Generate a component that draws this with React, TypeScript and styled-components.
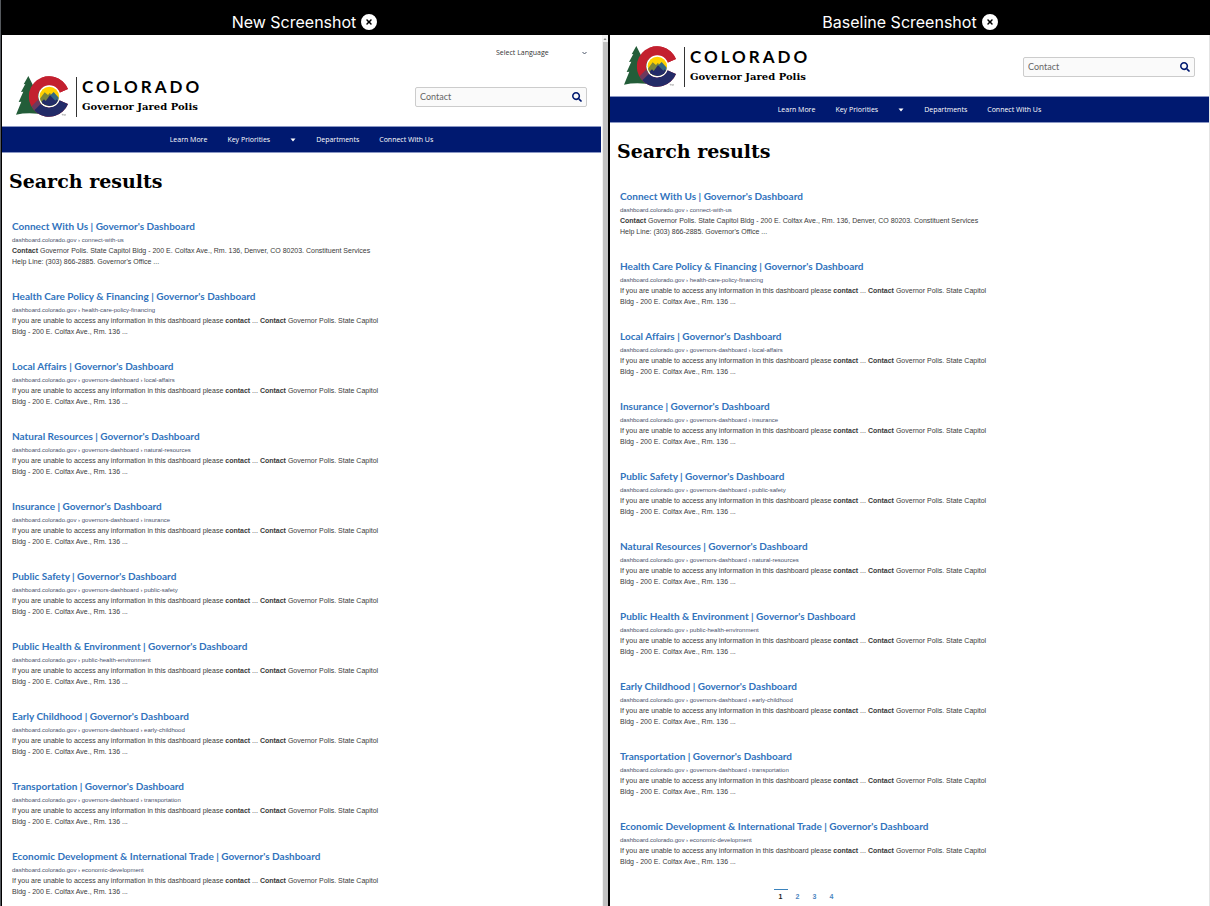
import React from "react";
import styled, { createGlobalStyle } from "styled-components";
import { FaCircleXmark } from "react-icons/fa6";
import { FaSearch } from "react-icons/fa";

const GlobalStyle = createGlobalStyle`
  *, *::before, *::after { box-sizing: border-box; }
  body { margin: 0; background: #000; }
  h1, h2, p, ol, ul { margin: 0; padding: 0; }
  ol, ul { list-style: none; }
`;

const humanist = `Lato, "Open Sans", sans-serif`;
const compact = `"Open Sans", "Noto Sans", sans-serif`;
const slab = `"DejaVu Serif", serif`;
const plain = `"Liberation Sans", Arial, sans-serif`;

const Compare = styled.main`
  display: grid;
  grid-template-columns: 607fr 600fr;
  gap: 2px;
  height: 100vh;
  overflow: hidden;
  background: #000;
  border-left: 1px solid #55595e;
`;

const Column = styled.section`
  display: flex;
  flex-direction: column;
  min-width: 0;
  min-height: 0;
`;

const Caption = styled.header`
  display: flex;
  align-items: center;
  justify-content: center;
  gap: 5px;
  height: 35px;
  flex: none;
  padding-top: 9px;
  color: #fff;
  font: 400 16px/26px Inter, sans-serif;
`;

const CaptionTitle = styled.h2`
  font: inherit;
`;

const CloseButton = styled.button`
  display: flex;
  padding: 0;
  border: 0;
  background: none;
  color: #fff;
  font-size: 16px;
  cursor: pointer;
`;

const Viewport = styled.div<{ $scrolls?: boolean }>`
  display: flex;
  flex: 1;
  min-height: 0;
  margin-left: ${(p) => (p.$scrolls ? "1px" : "0")};
  background: #fff;
  border-right: ${(p) => (p.$scrolls ? "0" : "1px solid #e4e4e4")};
`;

const Site = styled.div`
  flex: 1;
  min-width: 0;
  overflow: hidden;
`;

const ScrollTrack = styled.div`
  display: flex;
  flex-direction: column;
  align-items: center;
  width: 6px;
  margin-left: 1px;
  background: #f1f1f1;
`;

const ScrollArrow = styled.svg`
  width: 4px;
  height: 7px;
  flex: none;
`;

const ScrollThumb = styled.div`
  flex: 1;
  width: 5px;
  background: #c1c1c1;
`;

const LanguageBar = styled.div`
  display: flex;
  justify-content: flex-end;
  align-items: flex-end;
  height: 30px;
  padding: 0 14px 5px;
`;

const LanguageField = styled.label`
  display: flex;
  align-items: center;
  width: 91px;
  height: 14px;
`;

const LanguageSelect = styled.select`
  flex: 1;
  min-width: 0;
  padding: 0;
  border: 0;
  appearance: none;
  background: none;
  color: #333;
  font: 400 7px/14px ${compact};
`;

const Chevron = styled.svg`
  width: 5px;
  height: 4px;
  flex: none;
`;

const Masthead = styled.div`
  display: flex;
  align-items: center;
  justify-content: space-between;
  height: 61px;
  padding: 2px 14px 0;
`;

const Brand = styled.a`
  display: flex;
  align-items: center;
  color: #000;
  text-decoration: none;
`;

const Emblem = styled.svg`
  width: 52px;
  height: 41px;
`;

const BrandText = styled.span`
  display: flex;
  flex-direction: column;
  gap: 2px;
  height: 40px;
  margin-left: 8px;
  padding-left: 5px;
  border-left: 1px solid #333;
`;

const StateName = styled.span`
  font: 700 17px/20px Lato, sans-serif;
  letter-spacing: 3px;
`;

const OfficeName = styled.span`
  font: 700 10px/16px ${slab};
  white-space: nowrap;
`;

const SearchBox = styled.form`
  display: flex;
  align-items: center;
  width: 172px;
  height: 20px;
  padding: 0 4px;
  border: 1px solid #ccc;
  border-radius: 2px;
  background: #fafafa;
`;

const SearchInput = styled.input`
  flex: 1;
  min-width: 0;
  padding: 0;
  border: 0;
  outline: 0;
  background: none;
  color: #666;
  font: 400 9px/16px ${humanist};
`;

const SearchButton = styled.button`
  display: flex;
  padding: 0;
  border: 0;
  background: none;
  color: #001970;
  font-size: 10px;
`;

const Nav = styled.nav`
  display: flex;
  align-items: center;
  justify-content: center;
  gap: 20px;
  height: 27px;
  border: 1px solid #8a97c4;
  border-width: 1px 0;
  background: #001970;
`;

const NavLink = styled.a`
  color: #fff;
  font: 400 7px/14px ${compact};
  text-decoration: none;
  white-space: nowrap;
`;

const NavToggle = styled.button`
  display: flex;
  padding: 0;
  border: 0;
  background: none;
`;

const PageTitle = styled.h1`
  padding: 13px 7px 0;
  color: #000;
  font: 700 19px/30px ${slab};
`;

const Results = styled.ol`
  padding: 23px 0 0 10px;
`;

const Result = styled.li`
  padding-bottom: 22px;
`;

const ResultLink = styled.a`
  display: block;
  margin-bottom: 2px;
  color: #3173bd;
  font: 700 10px/14px ${humanist};
  font-variant-ligatures: none;
  text-decoration: none;
  white-space: nowrap;
`;

const ResultPath = styled.p`
  color: #48506a;
  font: 400 6px/10px ${plain};
`;

const Snippet = styled.p`
  color: #3a3a3a;
  font: 400 7px/11px ${plain};
`;

const Pages = styled.nav`
  display: flex;
  justify-content: center;
  gap: 3px;
  max-width: 392px;
`;

const PageLink = styled.a<{ $current?: boolean }>`
  width: 14px;
  border-top: 1px solid ${(p) => (p.$current ? "#3b83bd" : "transparent")};
  color: ${(p) => (p.$current ? "#222" : "#4d86bf")};
  font: 700 7px/14px ${plain};
  text-align: center;
  text-decoration: none;
`;

type Entry = { title: string; path: string[]; lead?: boolean };

const page = {
  connect: { title: "Connect With Us", path: ["connect-with-us"], lead: true },
  health: { title: "Health Care Policy & Financing", path: ["health-care-policy-financing"] },
  local: { title: "Local Affairs", path: ["governors-dashboard", "local-affairs"] },
  natural: { title: "Natural Resources", path: ["governors-dashboard", "natural-resources"] },
  insurance: { title: "Insurance", path: ["governors-dashboard", "insurance"] },
  safety: { title: "Public Safety", path: ["governors-dashboard", "public-safety"] },
  environment: { title: "Public Health & Environment", path: ["public-health-environment"] },
  childhood: { title: "Early Childhood", path: ["governors-dashboard", "early-childhood"] },
  transport: { title: "Transportation", path: ["governors-dashboard", "transportation"] },
  economic: { title: "Economic Development & International Trade", path: ["economic-development"] },
} satisfies Record<string, Entry>;

const newEntries: Entry[] = [
  page.connect, page.health, page.local, page.natural, page.insurance,
  page.safety, page.environment, page.childhood, page.transport, page.economic,
];

const baselineEntries: Entry[] = [
  page.connect, page.health, page.local, page.insurance, page.safety,
  page.natural, page.environment, page.childhood, page.transport, page.economic,
];

function ColoradoEmblem({ id }: { id: string }) {
  const letter = `${id}-letter`;
  const disc = `${id}-disc`;
  return (
    <Emblem viewBox="0 0 156 123" aria-hidden="true">
      <defs>
        <clipPath id={letter}>
          <path d="M156 39A61 61 0 1 0 156 84L130 73A33 33 0 1 1 130 50Z" />
        </clipPath>
        <clipPath id={disc}>
          <circle cx="100" cy="61" r="29" />
        </clipPath>
      </defs>
      <path
        d="M37 0L23 25L28 24L15 48L22 47L8 78L16 77L0 116Q30 109 66 113L90 20L51 28Z"
        fill="#235d39"
      />
      <g clipPath={`url(#${letter})`}>
        <rect x="30" width="130" height="123" fill="#c3202f" />
        <path d="M30 108L66 71L84 92L60 118Z" fill="#6d3a5d" />
        <path d="M46 112L78 80L100 60H160V123H48Z" fill="#232b68" />
        <path d="M74 0H160V60H100Z" fill="#c3202f" />
      </g>
      <circle cx="100" cy="61" r="33" fill="#fff" />
      <g clipPath={`url(#${disc})`}>
        <rect x="68" y="28" width="66" height="66" fill="#ffd100" />
        <path d="M66 76L86 49L96 57L102 50L112 72V90H66Z" fill="#7a853b" />
        <path d="M98 62L113 48L136 74V90H98Z" fill="#356980" />
        <path d="M68 86L84 70L89 75L102 58L118 74L122 70L136 86V96H68Z" fill="#232b68" />
      </g>
      <path d="M137 115h5m-2 0v4m4 0v-4l2 3l2-3v4" fill="none" stroke="#555" strokeWidth="1" />
    </Emblem>
  );
}

function SiteSnapshot({ id, entries, language, pages }: {
  id: string;
  entries: Entry[];
  language?: boolean;
  pages?: number[];
}) {
  return (
    <Site>
      {language && (
        <LanguageBar>
          <LanguageField>
            <LanguageSelect aria-label="Select Language" defaultValue="">
              <option value="">Select Language</option>
            </LanguageSelect>
            <Chevron viewBox="0 0 10 8" aria-hidden="true">
              <path d="M1 2L5 6L9 2" fill="none" stroke="#4a5568" strokeWidth="2" />
            </Chevron>
          </LanguageField>
        </LanguageBar>
      )}
      <Masthead>
        <Brand href="#home">
          <ColoradoEmblem id={id} />
          <BrandText>
            <StateName>COLORADO</StateName>
            <OfficeName>Governor Jared Polis</OfficeName>
          </BrandText>
        </Brand>
        <SearchBox role="search">
          <SearchInput aria-label="Search" defaultValue="Contact" />
          <SearchButton type="button" aria-label="Search"><FaSearch /></SearchButton>
        </SearchBox>
      </Masthead>
      <Nav>
        <NavLink href="#learn">Learn More</NavLink>
        <NavLink href="#priorities">Key Priorities</NavLink>
        <NavToggle type="button" aria-label="Show key priorities">
          <svg width="6" height="4" viewBox="0 0 6 4" aria-hidden="true">
            <path d="M0.5 0.5H5.5L3 3.5Z" fill="#fff" />
          </svg>
        </NavToggle>
        <NavLink href="#departments">Departments</NavLink>
        <NavLink href="#connect">Connect With Us</NavLink>
      </Nav>
      <PageTitle>Search results</PageTitle>
      <Results>
        {entries.map((entry) => (
          <Result key={entry.title}>
            <ResultLink href={`#${entry.path[entry.path.length - 1]}`}>
              {`${entry.title} | Governor's Dashboard`}
            </ResultLink>
            <ResultPath>{["dashboard.colorado.gov", ...entry.path].join(" › ")}</ResultPath>
            {entry.lead ? (
              <Snippet>
                <b>Contact</b> Governor Polis. State Capitol Bldg - 200 E. Colfax Ave., Rm. 136,
                Denver, CO 80203. Constituent Services
                <br />
                Help Line: (303) 866-2885. Governor's Office ...
              </Snippet>
            ) : (
              <Snippet>
                If you are unable to access any information in this dashboard please{" "}
                <b>contact</b> ... <b>Contact</b> Governor Polis. State Capitol
                <br />
                Bldg - 200 E. Colfax Ave., Rm. 136 ...
              </Snippet>
            )}
          </Result>
        ))}
      </Results>
      {pages && (
        <Pages aria-label="Result pages">
          {pages.map((n) => (
            <PageLink key={n} href={`#page-${n}`} $current={n === 1}>{n}</PageLink>
          ))}
        </Pages>
      )}
    </Site>
  );
}

export default function App() {
  return (
    <>
      <GlobalStyle />
      <Compare>
        <Column>
          <Caption>
            <CaptionTitle>New Screenshot</CaptionTitle>
            <CloseButton type="button" aria-label="Close new screenshot"><FaCircleXmark /></CloseButton>
          </Caption>
          <Viewport $scrolls>
            <SiteSnapshot id="new" entries={newEntries} language />
            <ScrollTrack>
              <ScrollArrow viewBox="0 0 4 7" aria-hidden="true">
                <path d="M0.5 5L2 3L3.5 5Z" fill="#888" />
              </ScrollArrow>
              <ScrollThumb />
            </ScrollTrack>
          </Viewport>
        </Column>
        <Column>
          <Caption>
            <CaptionTitle>Baseline Screenshot</CaptionTitle>
            <CloseButton type="button" aria-label="Close baseline screenshot"><FaCircleXmark /></CloseButton>
          </Caption>
          <Viewport>
            <SiteSnapshot id="baseline" entries={baselineEntries} pages={[1, 2, 3, 4]} />
          </Viewport>
        </Column>
      </Compare>
    </>
  );
}
